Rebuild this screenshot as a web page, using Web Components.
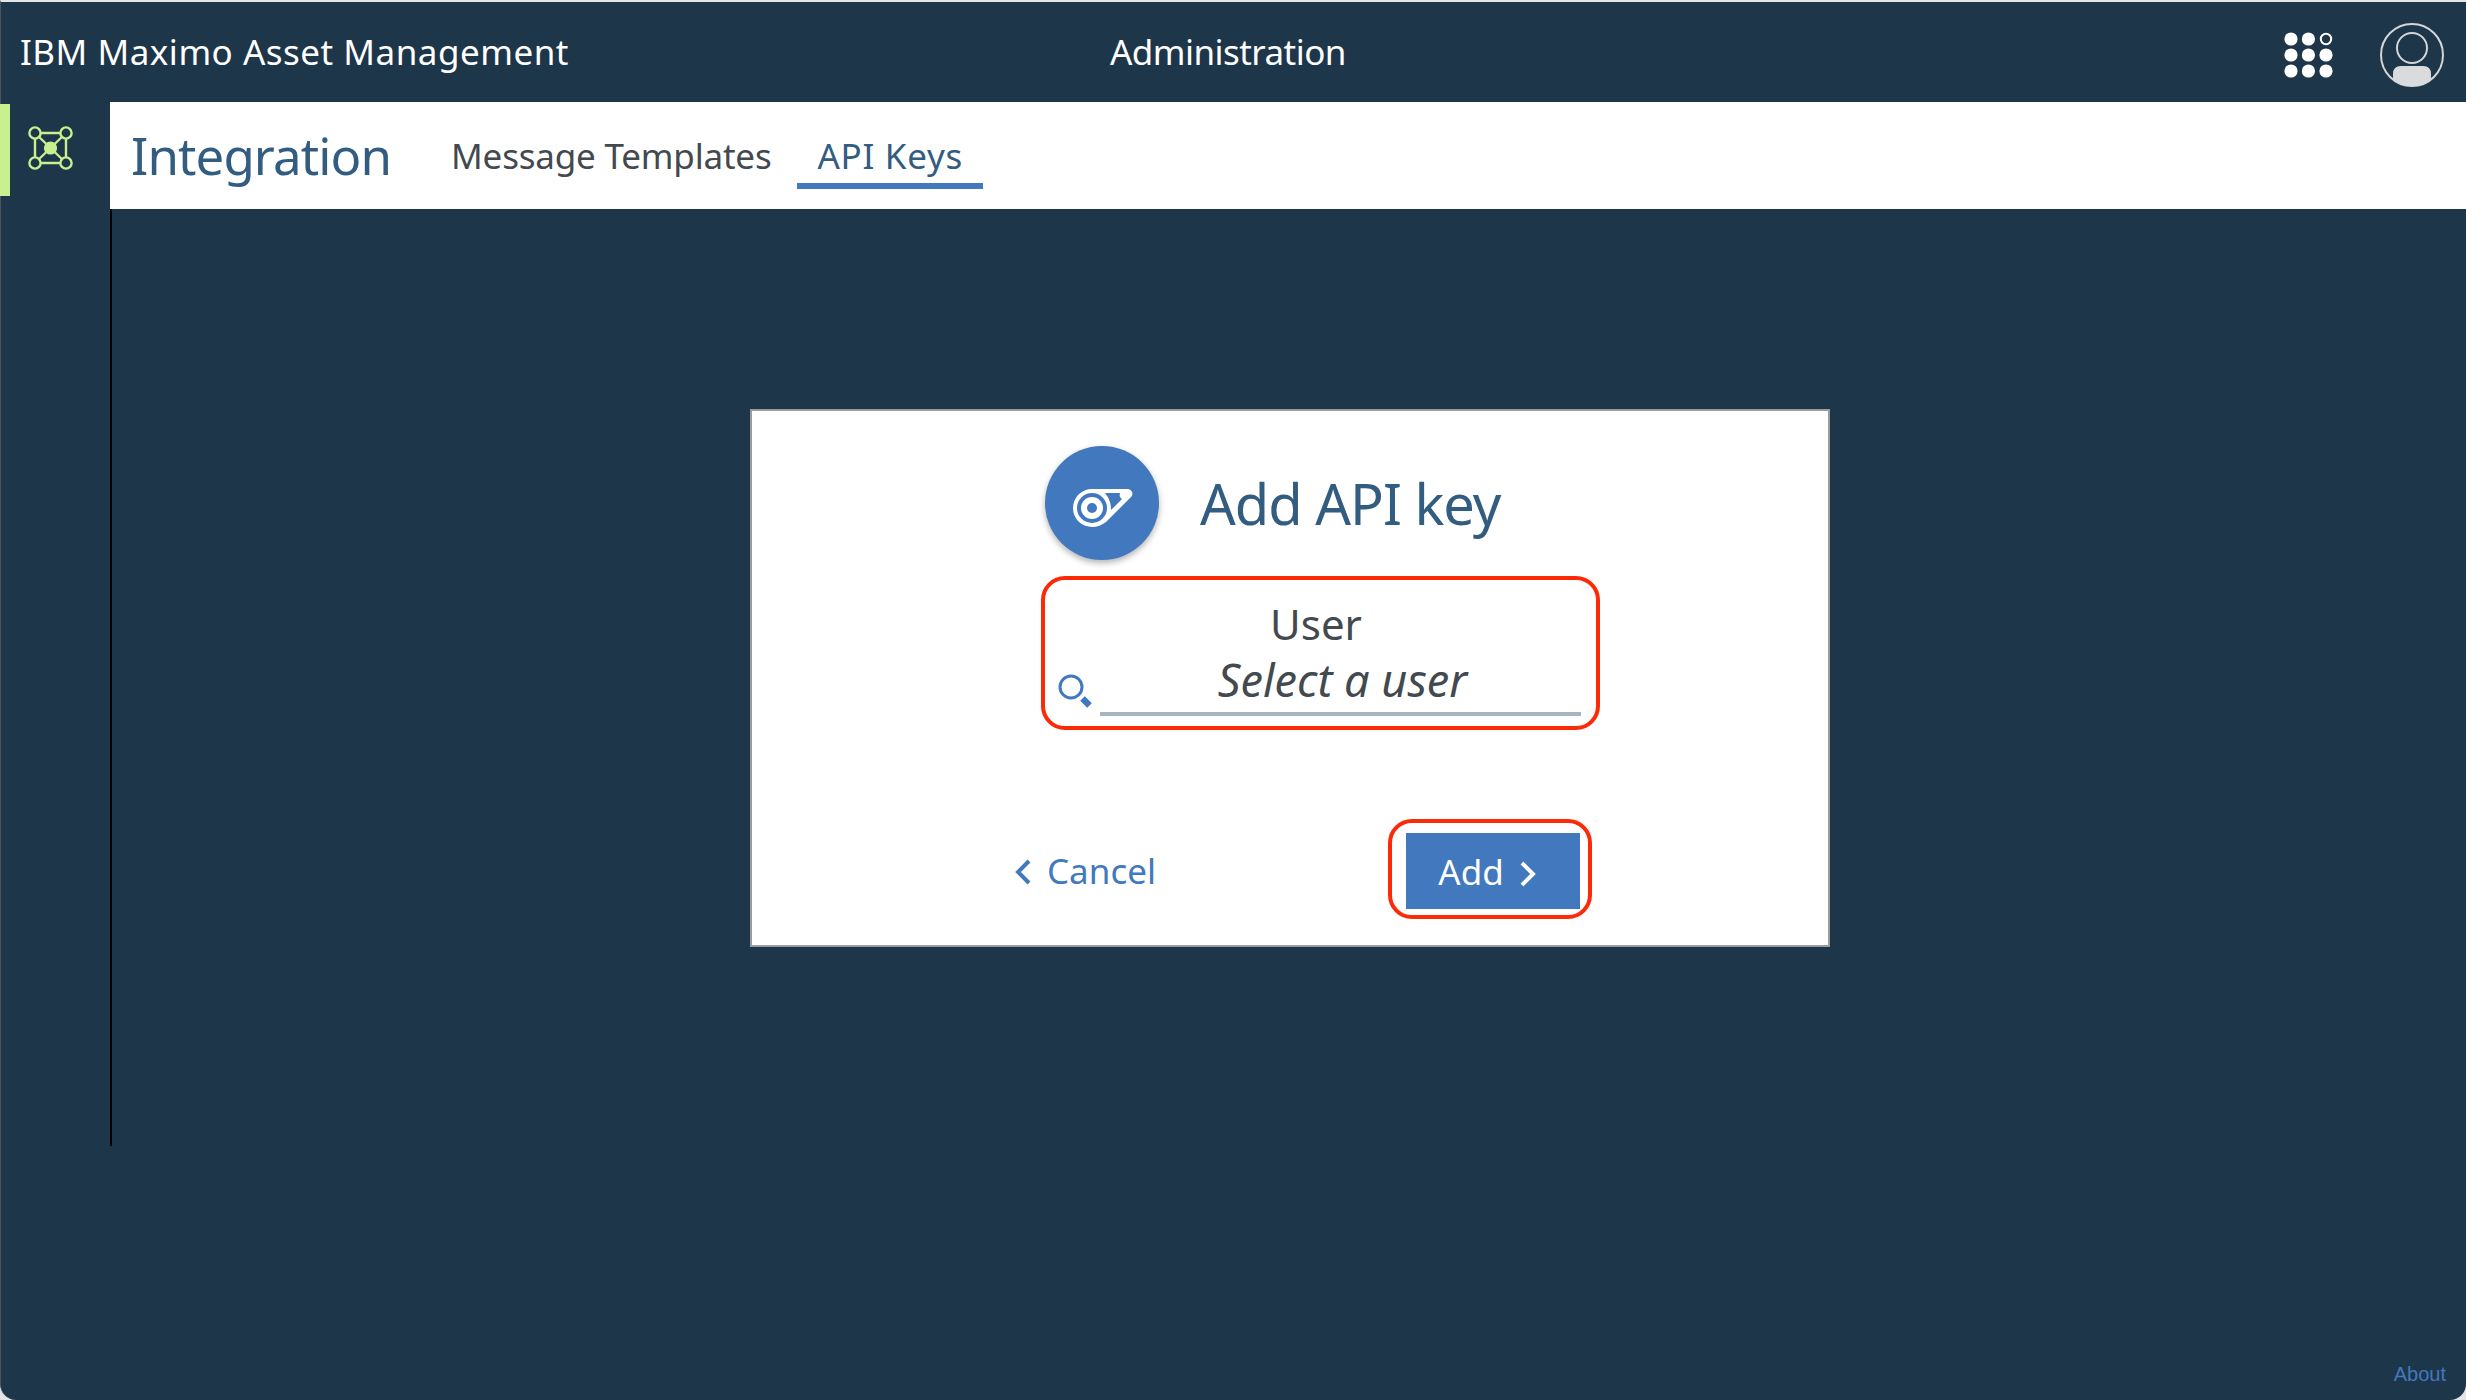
<!DOCTYPE html>
<html>
<head>
<meta charset="utf-8">
<title>API Keys</title>
<style>
html, body { margin: 0; height: 100%; background: #e3e4e5; overflow: hidden; }
body { font-family: "Noto Sans", "Open Sans", sans-serif; }
</style>
</head>
<body>

<app-shell>
    <app-header slot="header" title-text="IBM Maximo Asset Management" section="Administration"></app-header>
    <side-rail slot="rail"></side-rail>
    <page-bar slot="bar" heading="Integration">
        <nav-tab>Message Templates</nav-tab>
        <nav-tab active>API Keys</nav-tab>
    </page-bar>
    <api-key-dialog slot="main"></api-key-dialog>
    <span slot="about">About</span>
</app-shell>

<script>
class AppShell extends HTMLElement {

    connectedCallback() {
        this.attachShadow({ mode: 'open' });
        this.shadowRoot.innerHTML = `
            <style>
                :host {
                    display: grid;
                    grid-template-columns: 109px 1fr;
                    grid-template-rows: 100px 107px 937px 1fr;
                    height: 1400px;
                    box-sizing: border-box;
                    background: #1e364a;
                    border-top: 2px solid #e3e4e5;
                    border-left: 1px solid #4a5560;
                    border-radius: 0 0 16px 16px;
                }
                .head { grid-column: 1 / 3; }
                .main {
                    display: flex;
                    justify-content: center;
                    align-items: flex-start;
                    border-left: 2px solid #000;
                    padding: 200px 0 0 2px;
                    box-sizing: border-box;
                }
                .about {
                    grid-column: 1 / 3;
                    display: flex;
                    justify-content: flex-end;
                    align-items: flex-end;
                    padding: 0 20px 14px 0;
                    color: #4178be;
                    font: 20px "Liberation Sans", Arial, sans-serif;
                }
            </style>
            <div class="head"><slot name="header"></slot></div>
            <slot name="rail"></slot>
            <slot name="bar"></slot>
            <div></div>
            <div class="main"><slot name="main"></slot></div>
            <div class="about"><slot name="about"></slot></div>
        `;
    }
}

class AppHeader extends HTMLElement {

    connectedCallback() {
        this.attachShadow({ mode: 'open' });
        this.shadowRoot.innerHTML = `
            <style>
                :host {
                    display: grid;
                    grid-template-columns: 1109px 1fr auto;
                    align-items: center;
                    height: 100px;
                    color: #fff;
                    font-size: 35px;
                }
                .title { padding: 0 0 1px 19px; letter-spacing: 0.5px; }
                .section { padding-bottom: 1px; letter-spacing: -0.55px; }
                .icons { display: flex; align-items: center; gap: 45px; padding: 6px 21px 0 0; }
                svg { display: block; }
            </style>
            <div class="title">${this.getAttribute('title-text')}</div>
            <div class="section">${this.getAttribute('section')}</div>
            <div class="icons">
                <svg width="50" height="50" viewBox="0 0 50 50" fill="#fff">
                    <circle cx="7" cy="9" r="6.6"/><circle cx="24.4" cy="9" r="6.6"/>
                    <circle cx="42" cy="9" r="5.2" fill="none" stroke="#fff" stroke-width="2"/>
                    <circle cx="7" cy="25" r="6.6"/><circle cx="24.4" cy="25" r="6.6"/><circle cx="42" cy="25" r="6.6"/>
                    <circle cx="7" cy="41" r="6.6"/><circle cx="24.4" cy="41" r="6.6"/><circle cx="42" cy="41" r="6.6"/>
                </svg>
                <svg width="66" height="66" viewBox="0 0 66 66" fill="none" stroke="#d3d6d9" stroke-width="2">
                    <circle cx="33" cy="33" r="31"/>
                    <circle cx="33" cy="26" r="15"/>
                    <path fill="#d9dbdd" stroke="none" d="M14 58 V52 Q14 44 22 44 H44 Q52 44 52 52 V58 A31 31 0 0 1 33 64 A31 31 0 0 1 14 58 Z"/>
                </svg>
            </div>
        `;
    }
}

class SideRail extends HTMLElement {

    connectedCallback() {
        this.attachShadow({ mode: 'open' });
        this.shadowRoot.innerHTML = `
            <style>
                :host { display: block; padding-top: 2px; }
                .item {
                    display: flex;
                    align-items: flex-start;
                    height: 92px;
                    margin-left: -1px;
                    border-left: 10px solid #c8f08f;
                    padding: 21px 0 0 18px;
                    box-sizing: border-box;
                }
                svg { display: block; }
            </style>
            <div class="item">
                <svg width="46" height="46" viewBox="0 0 46 46" fill="none" stroke="#c8f08f" stroke-width="2.4">
                    <path d="M7 8 H38 V38 H7 Z M7 8 L38 38 M38 8 L7 38"/>
                    <circle cx="7" cy="8" r="5.6" fill="#1e364a"/>
                    <circle cx="38" cy="8" r="5.6" fill="#1e364a"/>
                    <circle cx="7" cy="38" r="5.6" fill="#1e364a"/>
                    <circle cx="38" cy="38" r="5.6" fill="#1e364a"/>
                    <circle cx="22.5" cy="23" r="6.6" fill="#c8f08f" stroke="none"/>
                </svg>
            </div>
        `;
    }
}

class PageBar extends HTMLElement {

    connectedCallback() {
        this.attachShadow({ mode: 'open' });
        this.shadowRoot.innerHTML = `
            <style>
                :host {
                    display: flex;
                    align-items: stretch;
                    background: #fff;
                    height: 107px;
                    padding-left: 21px;
                }
                h1 {
                    margin: 0 40px 0 0;
                    align-self: center;
                    font-size: 51px;
                    font-weight: 400;
                    letter-spacing: -0.9px;
                    color: #325c80;
                    line-height: 1;
                    padding-bottom: 1px;
                }
                .tabs { display: flex; align-items: stretch; }
            </style>
            <h1>${this.getAttribute('heading')}</h1>
            <div class="tabs"><slot></slot></div>
        `;
    }
}

class NavTab extends HTMLElement {

    connectedCallback() {
        this.attachShadow({ mode: 'open' });
        this.shadowRoot.innerHTML = `
            <style>
                :host {
                    display: flex;
                    align-items: center;
                    height: 84px;
                    padding: 22px 20px 0;
                    box-sizing: border-box;
                    font-size: 35px;
                    letter-spacing: -0.2px;
                    color: #42494f;
                }
                :host([active]) {
                    color: #325c80;
                    border-bottom: 6px solid #4178be;
                    height: 87px;
                    padding: 25px 20px 0;
                    margin-left: 6px;
                    letter-spacing: 0.7px;
                }
            </style>
            <slot></slot>
        `;
    }
}

class CallOut extends HTMLElement {

    connectedCallback() {
        this.attachShadow({ mode: 'open' });
        this.shadowRoot.innerHTML = `
            <style>
                :host {
                    display: block;
                    box-sizing: border-box;
                    border: 4px solid #fb2a08;
                    border-radius: 24px;
                }
            </style>
            <slot></slot>
        `;
    }
}

class ApiKeyDialog extends HTMLElement {

    connectedCallback() {
        this.attachShadow({ mode: 'open' });
        this.shadowRoot.innerHTML = `
            <style>
                :host {
                    display: block;
                    width: 1080px;
                    height: 538px;
                    box-sizing: border-box;
                    background: #fff;
                    border: 2px solid #9a9da0;
                }
                .head {
                    display: flex;
                    align-items: center;
                    gap: 41px;
                    height: 118px;
                    margin: 33px 0 0 293px;
                }
                .badge {
                    width: 114px;
                    height: 114px;
                    border-radius: 50%;
                    background: #4178be;
                    box-shadow: 0 3px 6px rgba(0,0,0,.3);
                    display: flex;
                    align-items: center;
                    justify-content: center;
                }
                h2 {
                    margin: 0;
                    font-size: 56px;
                    font-weight: 400;
                    letter-spacing: -1px;
                    color: #325c80;
                }
                call-out.field {
                    width: 559px;
                    height: 154px;
                    margin: 14px 0 0 289px;
                }
                .inner {
                    display: grid;
                    grid-template-columns: 55px 1fr;
                    height: 100%;
                    padding: 0 15px 0 0;
                    box-sizing: border-box;
                }
                .label {
                    grid-column: 1 / 3;
                    text-align: center;
                    font-size: 42px;
                    color: #42494f;
                    line-height: 56px;
                    margin-top: 16px;
                    padding-left: 6px;
                }
                .search { padding: 12px 0 0 13px; }
                .input {
                    border-bottom: 4px solid #aab4bf;
                    text-align: center;
                    font-size: 45px;
                    font-style: italic;
                    color: #42494f;
                    line-height: 56px;
                    height: 60px;
                    margin-top: -10px;
                    padding-left: 4px;
                    box-sizing: content-box;
                }
                .actions {
                    display: flex;
                    align-items: center;
                    justify-content: space-between;
                    margin: 89px 236px 0 263px;
                }
                .cancel {
                    display: flex;
                    align-items: center;
                    gap: 16px;
                    margin-top: 2px;
                    color: #4178be;
                    font-size: 35px;
                }
                .cancel svg { margin-top: 4px; }
                call-out.go {
                    width: 204px;
                    height: 100px;
                    padding: 10px 8px 6px 14px;
                }
                .add {
                    display: flex;
                    align-items: center;
                    justify-content: center;
                    gap: 16px;
                    height: 76px;
                    padding-right: 12px;
                    background: #4178be;
                    color: #fff;
                    font-size: 35px;
                }
                .add svg { margin-top: 6px; }
                svg { display: block; }
            </style>
            <div class="head">
                <div class="badge">
                    <svg width="82" height="62" viewBox="0 0 82 62">
                        <path fill="#fff" d="M31 17 H66 C71 17 73 22 70 25 L45 50 C41 53 36 55 31 55 A19 19 0 0 1 31 17 Z"/>
                        <path fill="#4178be" d="M44 21 H59 C58 24 59 26 61 27 L50 38 C50 31 48 26 44 21 Z"/>
                        <circle cx="31" cy="36" r="15" fill="#4178be"/>
                        <circle cx="31" cy="36" r="11" fill="#fff"/>
                        <circle cx="31" cy="36" r="5" fill="#4178be"/>
                    </svg>
                </div>
                <h2>Add API key</h2>
            </div>
            <call-out class="field">
                <div class="inner">
                    <div class="label">User</div>
                    <div class="search">
                        <svg width="40" height="40" viewBox="0 0 40 40" fill="none" stroke="#4178be">
                            <circle cx="13" cy="13" r="11" stroke-width="3"/>
                            <path d="M24.5 24.5 L31.5 31.5" stroke-width="6.5"/>
                        </svg>
                    </div>
                    <div class="input">Select a user</div>
                </div>
            </call-out>
            <div class="actions">
                <div class="cancel">
                    <svg width="16" height="26" viewBox="0 0 16 26" fill="none" stroke="#4178be" stroke-width="4"><path d="M14 2 L3 13 L14 24"/></svg>
                    <span>Cancel</span>
                </div>
                <call-out class="go">
                    <div class="add">
                        <span>Add</span>
                        <svg width="16" height="26" viewBox="0 0 16 26" fill="none" stroke="#fff" stroke-width="4"><path d="M2 2 L13 13 L2 24"/></svg>
                    </div>
                </call-out>
            </div>
        `;
    }
}

customElements.define('app-shell', AppShell);
customElements.define('app-header', AppHeader);
customElements.define('side-rail', SideRail);
customElements.define('page-bar', PageBar);
customElements.define('nav-tab', NavTab);
customElements.define('call-out', CallOut);
customElements.define('api-key-dialog', ApiKeyDialog);
</script>
</body>
</html>
